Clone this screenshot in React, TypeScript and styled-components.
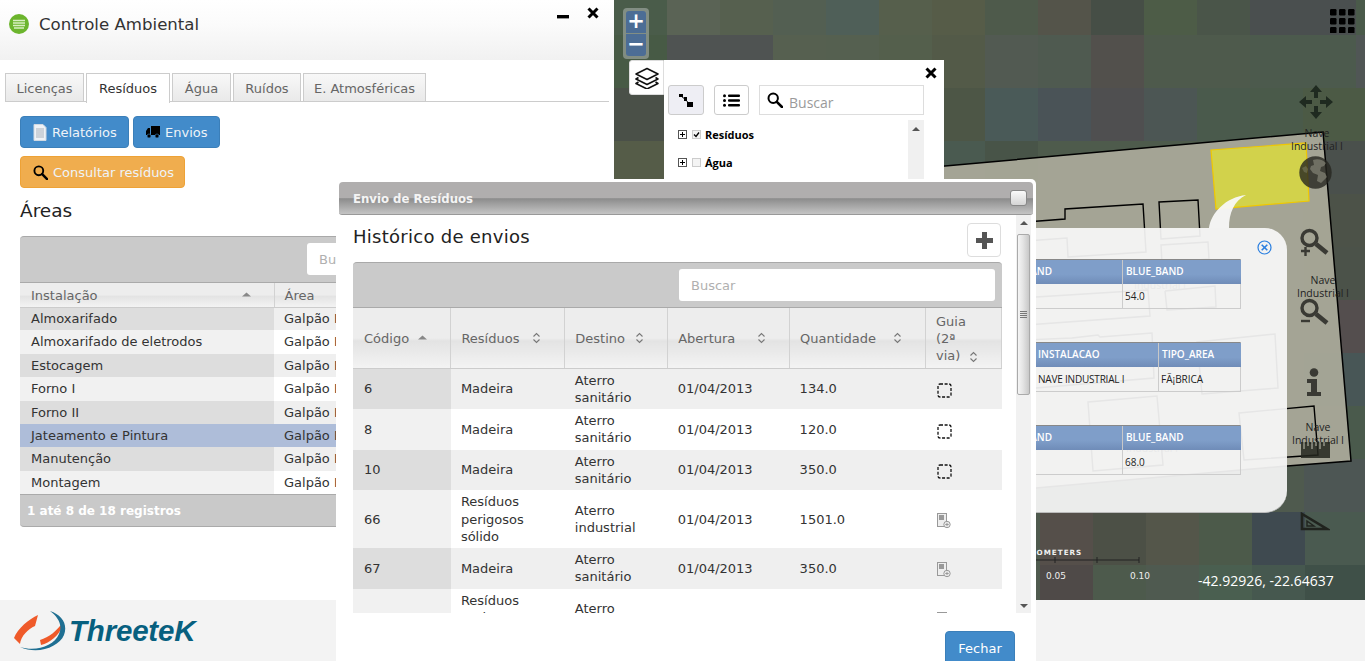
import React from 'react';
import styled, { createGlobalStyle } from 'styled-components';

const Global = createGlobalStyle`
  html, body { margin: 0; padding: 0; background: #fff; overflow: hidden; }
  * { box-sizing: border-box; }
  body { font-family: "DejaVu Sans", Verdana, sans-serif; font-size: 13px; color: #333; }
`;

const Page = styled.div`
  position: relative; width: 1365px; height: 661px; overflow: hidden;
  display: grid; grid-template-rows: 600px 61px;
`;
const TopRow = styled.div`display: flex; min-height: 0;`;
const LeftPanel = styled.section`width: 614px; flex: none; display: flex; flex-direction: column; background: #fff; overflow: hidden;`;
const AppHeader = styled.header`
  height: 60px; flex: none; display: flex; align-items: flex-start; gap: 10px; padding: 14px 0 0 9px;
  background: linear-gradient(#ffffff 0%, #fbfbfb 40%, #f1f1f1 100%); position: relative;
`;
const AppTitle = styled.h1`margin: 0; font: 400 16.6px/21px "DejaVu Sans", sans-serif; color: #333;`;
const WinControls = styled.div`margin-left: auto; margin-right: 15px; margin-top: -13px; display: flex; gap: 17px; align-items: center; height: 24px;`;
const Tabs = styled.nav`margin: 13px 5px 0 5px; height: 29px; display: flex; gap: 2px; border-bottom: 1px solid #ccc; flex: none;`;
const Tab = styled.div<{ $active?: boolean; $w: number }>`
  width: ${p => p.$w}px; height: ${p => (p.$active ? 30 : 29)}px; text-align: center; font-size: 13px; line-height: 29px;
  border: 1px solid #ccc; border-bottom: ${p => (p.$active ? 'none' : '1px solid #ccc')};
  color: ${p => (p.$active ? '#333' : '#666')};
  background: ${p => (p.$active ? '#fff' : 'linear-gradient(#f8f8f8, #e9e9e9)')};
`;
const ButtonRow = styled.div<{ $top: number }>`display: flex; gap: 4px; margin-top: ${p => p.$top}px; padding-left: 20px; flex: none;`;
const ActionButton = styled.button<{ $tone: 'blue' | 'orange'; $w: number }>`
  width: ${p => p.$w}px; height: 32px; padding: 0 0 0 12px; display: flex; align-items: center; gap: 5px;
  font: 400 13px "DejaVu Sans", sans-serif; color: #eef3f8; border-radius: 4px;
  background: ${p => (p.$tone === 'blue' ? '#428bca' : '#f0ad4e')};
  border: 1px solid ${p => (p.$tone === 'blue' ? '#3b7fb9' : '#eea236')};
`;
const SectionTitle = styled.h2`margin: 12px 0 0 20px; font: 400 18.5px/22px "DejaVu Sans", sans-serif; color: #222; flex: none;`;

const GridShell = styled.div<{ $left?: number; $top?: number }>`margin-left: ${p => p.$left ?? 0}px; margin-top: ${p => p.$top ?? 0}px; flex: none;`;
const GridToolbar = styled.div<{ $h: number }>`
  height: ${p => p.$h}px; background: #cacaca; border-top: 1px solid #a9a9a9; border-radius: 4px 4px 0 0;
  border-bottom: 1px solid #aaa; display: flex; align-items: flex-start; padding-top: 6px;
`;
const GridSearch = styled.div<{ $x: number; $w: number }>`
  margin-left: ${p => p.$x}px; width: ${p => p.$w}px; height: 32px; background: #fff; border-radius: 3px;
  color: #b0b0b0; font-size: 13px; line-height: 33px; padding-left: 12px;
`;
const Table = styled.table`border-collapse: collapse; table-layout: fixed; background: #fff;`;
const HeadCell = styled.th<{ $w: number; $h: number; $narrow?: boolean }>`
  position: relative; width: ${p => p.$w}px; height: ${p => p.$h}px; text-align: left; font: 400 13px/17px "DejaVu Sans", sans-serif;
  color: #666; padding: 1px ${p => (p.$narrow ? 22 : 10)}px 0 10px; border-right: 1px solid #d2d2d2; border-bottom: 1px solid #ccc;
  background: linear-gradient(#ededed 0 50%, #e3e3e3 55%, #f3f3f3 100%);
  &:first-child { padding-left: 11px; }
`;
const SortMark = styled.span<{ $bottom?: boolean }>`
  position: absolute; right: 24px; width: 8px; height: 12px; display: block;
  ${p => (p.$bottom ? 'bottom: 6px;' : 'top: 50%; margin-top: -7px;')}
`;
const Row = styled.tr<{ $alt: boolean; $selected?: boolean }>`
  background: ${p => (p.$selected ? '#aebdd9' : p.$alt ? '#efefef' : '#fff')};
  & > td:first-child { background: ${p => (p.$selected ? '#aebdd9' : p.$alt ? '#dddddd' : '#f1f1f1')}; padding-left: 11px; }
`;
const Cell = styled.td`
  padding: 3px 10px; font: 400 13px/17.3px "DejaVu Sans", sans-serif; color: #333; vertical-align: middle;
`;
const CompactCell = styled(Cell)`
  height: 23.4px; padding-top: 0; padding-bottom: 0; white-space: nowrap; overflow: hidden;
`;
const GuideIcon = styled.span`display: block; margin: 4px 0 0 2px; line-height: 0;`;
const GridFooter = styled.div`
  height: 33px; background: #c9c9c9; border-top: 1px solid #aaa; border-bottom: 1px solid #aaa; border-radius: 0 0 4px 4px;
  font: 700 12px/33px "DejaVu Sans", sans-serif; color: #fff; padding-left: 7px;
`;

const BottomBar = styled.footer`background: #f3f3f3; display: flex; align-items: center; padding: 0 0 0 12px; gap: 1px;`;
const LogoText = styled.span`font: italic 700 29.5px/1 "Liberation Sans", sans-serif; color: #07607f; letter-spacing: -0.2px;`;

const MapArea = styled.section`position: relative; flex: 1; overflow: hidden; background: #4f5a4e;`;
const MapCanvas = styled.svg`display: block; width: 751px; height: 600px;`;
const ZoomGroup = styled.div`
  position: absolute; left: 9px; top: 8px; width: 26px; height: 51px; padding: 3px; border-radius: 4px;
  background: rgba(200,205,205,.45); display: flex; flex-direction: column; gap: 1px;
`;
const ZoomBtn = styled.div<{ $top?: boolean }>`
  flex: 1; background: #4c6d95; color: #fff; font: 700 21px/21px "DejaVu Sans", sans-serif; text-align: center;
  border-radius: ${p => (p.$top ? '3px 3px 0 0' : '0 0 3px 3px')};
`;
const LayersBtn = styled.div`
  position: absolute; left: 15px; top: 60px; width: 35px; height: 35px; background: #fff; border: 1px solid #ddd; border-radius: 3px 0 0 3px;
  display: flex; align-items: center; justify-content: center;
`;
const LayerPanel = styled.div`position: absolute; left: 50px; top: 60px; width: 280px; height: 125px; background: #fff; padding: 25px 20px 0 4px;`;
const PanelClose = styled.span`position: absolute; right: 7px; top: 7px; width: 12px; height: 12px; display: block;`;
const PanelTools = styled.div`display: flex; align-items: stretch; height: 30px;`;
const ToolBtn = styled.div<{ $on?: boolean }>`
  width: ${p => (p.$on ? 36 : 35)}px; height: 30px; margin-right: 10px; border: 1px solid #ccc; border-radius: 3px; background: ${p => (p.$on ? '#eeeef4' : '#fff')};
  display: flex; align-items: center; justify-content: center;
`;
const PanelSearch = styled.div`
  width: 165px; border: 1px solid #ddd; display: flex; align-items: center; gap: 6px; padding-left: 7px;
  font: 400 14px "Open Sans", sans-serif; color: #9a9a9a;
`;
const PanelSearchText = styled.span`margin-top: 4px;`;
const TreeArea = styled.div`display: flex; margin-top: 5px; height: 60px;`;
const TreeList = styled.div`flex: 1; padding: 0 0 0 10px;`;
const TreeRow = styled.div`display: flex; align-items: center; height: 28px; gap: 5px; font: 700 11px "Open Sans", sans-serif; color: #000;`;
const Expander = styled.span`width: 9px; height: 9px; display: block; flex: none;`;
const TreeCheck = styled.span`width: 9px; height: 9px; border: 1px solid #ccc; background: #f4f4f4; flex: none; display: block; margin-right: -1px; position: relative;`;
const PanelScroll = styled.div`width: 16px; background: #f0f0f0; display: flex; justify-content: center; padding-top: 7px;`;
const ArrowUp = styled.span<{ $c?: string }>`width: 0; height: 0; border: 4px solid transparent; border-top: 0; border-bottom: 4px solid ${p => p.$c ?? '#555'}; display: block;`;
const ArrowDown = styled.span`width: 0; height: 0; border: 4px solid transparent; border-bottom: 0; border-top: 4px solid #555; display: block;`;

const MapLabel = styled.span<{ $x: number; $y: number }>`
  position: absolute; left: ${p => p.$x}px; top: ${p => p.$y}px; width: 100px; text-align: center;
  font: 400 10.5px/13px "Open Sans", sans-serif; color: #222;
`;
const ToolIcon = styled.span<{ $x: number; $y: number }>`position: absolute; left: ${p => p.$x}px; top: ${p => p.$y}px; display: block; line-height: 0;`;
const Bubble = styled.div`
  position: absolute; left: 286px; top: 228px; width: 387px; height: 285px; border-radius: 0 22px 22px 0;
  background: rgba(248,248,247,.93); border-bottom: 1px solid #bbb;
`;
const BubbleTail = styled.svg`position: absolute; left: 594px; top: 195px; width: 40px; height: 33px;`;
const BubbleClose = styled.span`position: absolute; left: 357px; top: 12px; width: 15px; height: 15px; display: block; line-height: 0;`;
const FeatureTable = styled.div<{ $top: number; $cols: string }>`
  position: absolute; left: 0; top: ${p => p.$top}px; width: 341px; display: grid; grid-template-columns: ${p => p.$cols}; grid-template-rows: 24px 24px;
  border-top: 1px solid #888; border-right: 1px solid #ccc; border-bottom: 1px solid #ccc;
`;
const FeatureHead = styled.div<{ $pl?: number; $pr?: number }>`
  background: linear-gradient(#7f9ec9 0 60%, #6f8cb8 100%); color: #fff; font: 600 10px/23px "Open Sans", sans-serif; white-space: nowrap;
  padding: 0 ${p => p.$pr ?? 3}px 0 ${p => p.$pl ?? 3}px; text-align: ${p => (p.$pr ? 'right' : 'left')};
  border-left: 1px solid #c8c8c8; overflow: hidden;
`;
const FeatureCell = styled.div<{ $pl?: number }>`
  font: 400 10px/24px "Open Sans", sans-serif; color: #222; padding: 0 2px 0 ${p => p.$pl ?? 2}px; border-left: 1px solid #ccc; white-space: nowrap;
  letter-spacing: ${p => (p.$pl ? '-.2px' : '0')};
`;
const ScaleTitle = styled.span`position: absolute; left: 407px; top: 547px; font: 700 7.2px/12px "DejaVu Sans", sans-serif; letter-spacing: 1px; color: #f0f0f0; white-space: nowrap;`;
const ScaleNum = styled.span<{ $x: number }>`position: absolute; left: ${p => p.$x}px; top: 570px; font: 400 9px/12px "DejaVu Sans", sans-serif; color: #eee;`;
const Coords = styled.span`position: absolute; left: 584px; top: 572px; font: 400 14px/18px "Open Sans", sans-serif; color: #fff;`;

const Modal = styled.div`
  position: absolute; left: 336px; top: 179px; width: 700px; height: 490px; background: #fff; border-radius: 5px 5px 0 0;
  padding: 3px 3px 0; display: flex; flex-direction: column;
`;
const ModalBar = styled.div`
  height: 33px; flex: none; border-radius: 4px 4px 3px 3px; position: relative; padding-left: 14px;
  background: linear-gradient(#b0aeae 0 50%, #8c8c8c 52%, #c4c4c4 100%); border-bottom: 1px solid #999;
  font: 700 11.7px/35px "DejaVu Sans", sans-serif; color: #f4f4f4;
`;
const MinBox = styled.span`position: absolute; right: 6px; top: 8px; width: 17px; height: 16px; border: 1px solid #888; border-radius: 3px; background: linear-gradient(#fafafa, #d5d5d5);`;
const ModalBody = styled.div`display: flex; height: 398px; flex: none;`;
const ModalScrollArea = styled.div`width: 677px; flex: none; overflow: hidden; padding: 0 14px;`;
const ModalTitleRow = styled.div`display: flex; justify-content: space-between; align-items: flex-start; height: 47px; padding-top: 8px;`;
const ModalTitle = styled.h2`margin: 2px 0 0; font: 400 18px/24px "DejaVu Sans", sans-serif; letter-spacing: .27px; color: #222;`;
const AddBtn = styled.div`width: 34px; height: 34px; border: 1px solid #ddd; border-radius: 4px; background: #fff; display: flex; align-items: center; justify-content: center; margin-right: 1px;`;
const VScroll = styled.div`width: 15px; flex: none; background: #f1f1f1; display: flex; flex-direction: column; align-items: center; padding-top: 6px; position: relative;`;
const VThumb = styled.div`
  position: absolute; left: 1px; top: 19px; width: 13px; height: 161px; border: 1px solid #aaa; border-radius: 2px;
  background: linear-gradient(90deg, #f5f5f5, #e4e4e4 45%, #c8c8c8); display: flex; flex-direction: column; justify-content: center; align-items: center; gap: 1px;
`;
const Grip = styled.i`display: block; width: 7px; height: 1px; background: #777;`;
const VBottom = styled.div`margin-top: auto; padding-bottom: 5px;`;
const ModalFooter = styled.div`display: flex; justify-content: flex-end; padding: 18px 18px 0 0;`;
const CloseBtn = styled.button`
  width: 70px; height: 34px; border: 1px solid #3b7fb9; border-radius: 4px; background: #428bca; color: #fff; font: 400 13px "DejaVu Sans", sans-serif; padding: 0;
`;

const tiles = [
  '#4a5c4a #5a6355 #56604f #535f52 #4f5f58 #565f4c #565c48 #4e5a4b #54544a #464e46 #4d5c47 #4a5549 #4a4f4f #4a4f4f #4a5a4a'.split(' '),
  '#475a45 #4f5352 #4f5352 #566050 #556050 #545f4c #535a48 #525a52 #4f5a50 #52504c #4e5a4c #4e5a4c #4c5a4d #4c5a4d #505655'.split(' '),
  '#4a5048 #4c5352 #555c50 #556050 #55604f #505e4a #4d5646 #4a5a58 #4a5357 #4f4f50 #4c5654 #4a5a4c #4a5a4a #4c5a45 #4c5a45'.split(' '),
  '#555c48 #555f4a #565f4a #50604d #4f5f4f #4e5f4e #4a5a50 #485448 #4e5b4c #4e5b4c #4e5b4c #4c5a4c #4c5a4d #4a504c #4a504c'.split(' '),
  '#4f5a46 #555f4a #565f4a #50604d #4f5f4f #4e5f4e #4f5c4e #505a4d #4f5a50 #514f4d #4f5a50 #4c5a4c #4c5a4d #4c5248 #4c5248'.split(' '),
];
const lowTiles = '#554f4a #4c5046 #54564a #4c5a4a #3f4a50 #4a5a50 #4a5a50'.split(' ');
const baseTiles = '#4f4a48 #4d5a4c #4f5a50 #4a5f50 #46584f #3f5048 #3f5048'.split(' ');
const rightCol = ['#4b5249', '#544e4e', '#485656', '#4a5a4c', '#4d5654', '#4d5654'];

const MapImage = () => (
  <MapCanvas viewBox="614 0 751 600" shapeRendering="crispEdges">
    {tiles.map((row, r) => row.map((c, i) => (
      <rect key={`${r}-${i}`} x={615 + 53 * i - 1} y={-18 + 53 * r} width={54} height={54} fill={c} />
    )))}
    {Array.from({ length: 5 }).map((_, r) => (
      <rect key={r} x={1304} y={247 + 53 * r} width={61} height={54} fill={rightCol[r]} />
    ))}
    {lowTiles.map((c, i) => <rect key={i} x={1040 + 53 * i} y={512} width={54} height={53} fill={c} />)}
    {baseTiles.map((c, i) => <rect key={i} x={1040 + 53 * i} y={565} width={54} height={35} fill={c} />)}
    <g shapeRendering="auto">
      <polygon points="900,170 1323,132 1351,461 1287,466 1036,488 900,500" fill="#a9a999" fillOpacity=".95" stroke="#000" strokeWidth="1.5" />
      <polygon points="1211,150 1306,143 1309,201 1216,209" fill="#d2d24b" stroke="#f0c800" strokeWidth="1.2" />
      <g fill="none" stroke="#000" strokeWidth="1.4">
        <polygon points="1000,224 1065,219 1065,209 1143,204 1146,252 1068,257 1067,238 1000,243" />
        <polygon points="1159,202 1198,200 1200,236 1161,239" />
        <polygon points="1161,245 1208,242 1209,259 1162,263" />
        <polyline points="1000,327 1150,316 1148,290 1036,297" />
        <polyline points="1165,291 1215,286 1216,307 1167,310 1165,291" />
        <polygon points="1072,338 1098,335 1100,337 1152,333 1154,378 1036,388 1000,390 1000,341" />
        <polygon points="1197,342 1275,334 1278,388 1202,394" />
        <polygon points="1088,402 1157,396 1163,465 1093,471" />
        <polygon points="1239,413 1314,406 1318,455 1244,460" />
      </g>
      <path d="M1000 560H1139M1055 557v6M1097 557v6M1139 557v6" stroke="#222" fill="none" />
    </g>
  </MapCanvas>
);

const DocIcon = () => (
  <svg width="14" height="17" viewBox="0 0 14 17"><path d="M1 .5h9l3 3v13H1z" fill="#eef2f6" stroke="#cfd8e2" /><path d="M3 5h8M3 7h8M3 9h8M3 11h8M3 13h8" stroke="#aab3bd" /></svg>
);
const TruckIcon = () => (
  <svg width="14" height="12" viewBox="0 0 14 12"><path d="M5 0h9v9H5zM0 9V5l2-3h2v7z" fill="#000" /><circle cx="3" cy="10" r="2" fill="#000" stroke="#428bca" strokeWidth=".6" /><circle cx="11" cy="10" r="2" fill="#000" stroke="#428bca" strokeWidth=".6" /></svg>
);
const SearchIcon = ({ s = 16, c = '#000' }: { s?: number; c?: string }) => (
  <svg width={s} height={s} viewBox="0 0 16 16"><circle cx="6.2" cy="6.2" r="4.7" fill="none" stroke={c} strokeWidth="2" /><path d="M9.8 9.8L15 15" stroke={c} strokeWidth="2.6" strokeLinecap="round" /></svg>
);
const CloseX = ({ s = 12 }: { s?: number }) => (
  <svg width={s} height={s} viewBox="0 0 12 12"><path d="M1.5 1.5l9 9M10.5 1.5l-9 9" stroke="#000" strokeWidth="3" /></svg>
);
const LayersIcon = () => (
  <svg width="24" height="22" viewBox="0 0 24 22" fill="none" stroke="#111" strokeWidth="1.6" strokeLinejoin="round">
    <path d="M12 1.5L23 7l-11 5.5L1 7z" /><path d="M3.5 10.5L1 12l11 5.5L23 12l-2.5-1.5" /><path d="M3.5 15L1 16.5 12 22l11-5.5L20.5 15" />
  </svg>
);
const SortBoth = () => (
  <svg width="9" height="12" viewBox="0 0 9 12" fill="none" stroke="#777" strokeWidth="1.1"><path d="M1.5 4.5l3-3 3 3M1.5 7.5l3 3 3-3" /></svg>
);
const SortUp = () => (
  <svg width="9" height="12" viewBox="0 0 9 12"><path d="M0 7.5l4.5-4 4.5 4z" fill="#888" /></svg>
);
const DashedBox = () => (
  <svg width="15" height="15" viewBox="0 0 15 15"><rect x="1" y="1" width="13" height="13" rx="2" fill="none" stroke="#111" strokeWidth="1.3" strokeDasharray="3 1.6" /></svg>
);
const FileIcon = () => (
  <svg width="14" height="16" viewBox="0 0 14 16"><rect x=".5" y=".5" width="9" height="13" fill="#eee" stroke="#999" /><rect x="2" y="2" width="5" height="5" fill="#999" /><circle cx="10" cy="11.5" r="3.2" fill="#eee" stroke="#999" /><path d="M10 9.8v3.4M8.3 11.5h3.4" stroke="#999" /></svg>
);
const ExpanderIcon = () => (
  <Expander><svg width="9" height="9" viewBox="0 0 9 9" style={{ display: 'block' }}><rect x=".5" y=".5" width="8" height="8" fill="#fff" stroke="#555" /><path d="M2 4.5h5M4.5 2v5" stroke="#000" /></svg></Expander>
);
const LogoMark = () => (
  <svg width="56" height="44" viewBox="0 0 56 44">
    <path d="M26 6C17 10 6 19 2 29l6 6c1-8 8-15 15-18z" fill="#ef5a2a" />
    <path d="M50 14C45 22 37 28 28 31l1 5c9-2 18-10 21-18z" fill="#ef5a2a" />
    <path d="M38 2c12 4 18 13 14 24C47 38 26 46 8 38c16 5 34-1 39-13 4-9-1-17-9-23z" fill="#1f6f92" />
  </svg>
);

const leftRows = ['Almoxarifado', 'Almoxarifado de eletrodos', 'Estocagem', 'Forno I', 'Forno II', 'Jateamento e Pintura', 'Manutenção', 'Montagem'];

type Ship = { id: string; res: string; dest: string; date: string; qty: string; pending: boolean };
const ships: Ship[] = [
  { id: '6', res: 'Madeira', dest: 'Aterro sanitário', date: '01/04/2013', qty: '134.0', pending: true },
  { id: '8', res: 'Madeira', dest: 'Aterro sanitário', date: '01/04/2013', qty: '120.0', pending: true },
  { id: '10', res: 'Madeira', dest: 'Aterro sanitário', date: '01/04/2013', qty: '350.0', pending: true },
  { id: '66', res: 'Resíduos perigosos sólido', dest: 'Aterro industrial', date: '01/04/2013', qty: '1501.0', pending: false },
  { id: '67', res: 'Madeira', dest: 'Aterro sanitário', date: '01/04/2013', qty: '350.0', pending: false },
  { id: '68', res: 'Resíduos perigosos sólido', dest: 'Aterro industrial', date: '01/04/2013', qty: '90.0', pending: false },
];
const shipCols: [string, number, boolean][] = [['Código', 98, true], ['Resíduos', 114, false], ['Destino', 103, false], ['Abertura', 122, false], ['Quantidade', 136, false], ['Guia (2ª via)', 76, false]];

const toolPaths = {
  move: (
    <svg width="34" height="34" viewBox="0 0 34 34" fill="#1f2a20">
      <path d="M17 0l6 7h-4v6h-4V7h-4zM17 34l-6-7h4v-6h4v6h4zM0 17l7-6v4h6v4H7v4zM34 17l-7 6v-4h-6v-4h6v-4z" />
    </svg>
  ),
  globe: (
    <svg width="33" height="33" viewBox="0 0 33 33">
      <circle cx="16.5" cy="16.5" r="16.2" fill="#26261f" fillOpacity=".8" />
      <path d="M14 4c5-2 10 0 13 3l-2 3-3 1-1 4 5 2 2 4-6 6-4-2 1-6-5-2-3-4 1-3 3-1z" fill="#b8b8a5" fillOpacity=".4" />
      <path d="M3 12l4-2 2 3-1 4-3-1z" fill="#b8b8a5" fillOpacity=".25" />
    </svg>
  ),
  zoomIn: (
    <svg width="30" height="30" viewBox="0 0 30 30" fill="none" stroke="#3a3a34">
      <circle cx="10.5" cy="10" r="7.5" strokeWidth="3.4" />
      <path d="M17 16l11 9" strokeWidth="4.6" />
      <path d="M2 23h9M6.5 19v9" strokeWidth="2.4" />
    </svg>
  ),
  zoomOut: (
    <svg width="30" height="30" viewBox="0 0 30 30" fill="none" stroke="#3a3a34">
      <circle cx="10.5" cy="11" r="7.5" strokeWidth="3.4" />
      <path d="M17 17l11 9" strokeWidth="4.6" />
      <path d="M2 24h9" strokeWidth="2.4" />
    </svg>
  ),
  info: <svg width="16" height="28" viewBox="0 0 16 28" fill="#3a3a34"><circle cx="8" cy="4.5" r="4.3" /><path d="M1 11h10v13h4v4H1v-4h4v-9H1z" /></svg>,
  ruler: <svg width="29" height="16" viewBox="0 0 29 16"><rect width="29" height="16" fill="#25271f" fillOpacity=".85" /><path d="M3 0v7M7 0v4M11 0v7M15 0v4M19 0v7M23 0v4" stroke="#c5c5b5" /></svg>,
  triangle: <svg width="30" height="19" viewBox="0 0 30 19" fill="none" stroke="#20231e" strokeWidth="2.6"><path d="M2 2v15h25z" /><path d="M7 9v5h7z" strokeWidth="1.4" /></svg>,
};

export default function App() {
  return (
    <Page>
      <Global />
      <TopRow>
        <LeftPanel>
          <AppHeader>
            <svg width="20" height="20" viewBox="0 0 20 20">
              <circle cx="10" cy="10" r="10" fill="#6cb52d" />
              <path d="M4 6.5h12M4 9h12M4 11.5h12M5 14h10" stroke="#d8efc0" strokeWidth="1.4" />
            </svg>
            <AppTitle>Controle Ambiental</AppTitle>
            <WinControls>
              <svg width="14" height="14" viewBox="0 0 14 14"><rect x="1" y="9" width="12" height="3.4" fill="#000" /></svg>
              <CloseX />
            </WinControls>
          </AppHeader>
          <Tabs>
            <Tab $w={79}>Licenças</Tab>
            <Tab $w={84} $active>Resíduos</Tab>
            <Tab $w={59}>Água</Tab>
            <Tab $w={68}>Ruídos</Tab>
            <Tab $w={123}>E. Atmosféricas</Tab>
          </Tabs>
          <ButtonRow $top={14}>
            <ActionButton $tone="blue" $w={109}><DocIcon />Relatórios</ActionButton>
            <ActionButton $tone="blue" $w={87}><TruckIcon />Envios</ActionButton>
          </ButtonRow>
          <ButtonRow $top={8}>
            <ActionButton $tone="orange" $w={165}><SearchIcon s={15} />Consultar resíduos</ActionButton>
          </ButtonRow>
          <SectionTitle>Áreas</SectionTitle>
          <GridShell $left={20} $top={14}>
            <GridToolbar $h={47}><GridSearch $x={287} $w={300}>Buscar</GridSearch></GridToolbar>
            <Table>
              <thead>
                <tr>
                  <HeadCell $w={254} $h={24}>Instalação<SortMark><SortUp /></SortMark></HeadCell>
                  <HeadCell $w={330} $h={24}>Área</HeadCell>
                </tr>
              </thead>
              <tbody>
                {leftRows.map((name, i) => (
                  <Row key={name} $alt={i % 2 === 0} $selected={name.startsWith('Jateamento')}>
                    <CompactCell>{name}</CompactCell>
                    <CompactCell>Galpão Principal</CompactCell>
                  </Row>
                ))}
              </tbody>
            </Table>
            <GridFooter>1 até 8 de 18 registros</GridFooter>
          </GridShell>
        </LeftPanel>
        <MapArea>
          <MapImage />
          <ZoomGroup>
            <ZoomBtn $top>+</ZoomBtn>
            <ZoomBtn>−</ZoomBtn>
          </ZoomGroup>
          <LayersBtn><LayersIcon /></LayersBtn>
          <LayerPanel>
            <PanelClose><CloseX /></PanelClose>
            <PanelTools>
              <ToolBtn $on>
                <svg width="15" height="15" viewBox="0 0 15 15"><path d="M2 3l5 4 4 5" stroke="#000" fill="none" /><rect x="0" y="1" width="4" height="3" /><rect x="5" y="4" width="3" height="4" /><rect x="8" y="9" width="6" height="5" /></svg>
              </ToolBtn>
              <ToolBtn>
                <svg width="17" height="13" viewBox="0 0 17 13"><circle cx="1.5" cy="1.8" r="1.5" /><circle cx="1.5" cy="6.5" r="1.5" /><circle cx="1.5" cy="11.2" r="1.5" /><rect x="5" y=".4" width="12" height="2.6" rx="1" /><rect x="5" y="5.2" width="12" height="2.6" rx="1" /><rect x="5" y="10" width="12" height="2.6" rx="1" /></svg>
              </ToolBtn>
              <PanelSearch><SearchIcon s={16} /><PanelSearchText>Buscar</PanelSearchText></PanelSearch>
            </PanelTools>
            <TreeArea>
              <TreeList>
                <TreeRow><ExpanderIcon /><TreeCheck><svg width="7" height="7" viewBox="0 0 7 7" style={{ display: 'block' }}><path d="M1 3.5l2 2 3-4" stroke="#000" strokeWidth="1.3" fill="none" /></svg></TreeCheck>Resíduos</TreeRow>
                <TreeRow><ExpanderIcon /><TreeCheck />Água</TreeRow>
              </TreeList>
              <PanelScroll><ArrowUp /></PanelScroll>
            </TreeArea>
          </LayerPanel>

          <MapLabel $x={653} $y={127}>Nave<br />Industrial I</MapLabel>
          <MapLabel $x={659} $y={274}>Nave<br />Industrial I</MapLabel>
          <MapLabel $x={654} $y={421}>Nave<br />Industrial I</MapLabel>
          <ToolIcon $x={685} $y={85}>{toolPaths.move}</ToolIcon>
          <ToolIcon $x={685} $y={156}>{toolPaths.globe}</ToolIcon>
          <ToolIcon $x={685} $y={228}>{toolPaths.zoomIn}</ToolIcon>
          <ToolIcon $x={685} $y={297}>{toolPaths.zoomOut}</ToolIcon>
          <ToolIcon $x={692} $y={368}>{toolPaths.info}</ToolIcon>
          <ToolIcon $x={687} $y={442}>{toolPaths.ruler}</ToolIcon>
          <ToolIcon $x={686} $y={512}>{toolPaths.triangle}</ToolIcon>
          <ToolIcon $x={716} $y={9}>
            <svg width="25" height="24" viewBox="0 0 25 24" fill="#000">
              {[0, 9, 18].map(y => [0, 9, 18].map(x => <rect key={`${x}${y}`} x={x} y={y} width="6.5" height="6.5" rx="1.2" />))}
            </svg>
          </ToolIcon>

          <MapLabel $x={496} $y={279}>Industrial I</MapLabel>
          <MapLabel $x={488} $y={442}>Industrial I</MapLabel>
          <BubbleTail viewBox="0 0 40 33"><path d="M1 33C3 18 18 2 38 0 26 6 21 18 21 33z" fill="#f8f8f7" fillOpacity=".95" /></BubbleTail>
          <Bubble>
            <BubbleClose>
              <svg width="15" height="15" viewBox="0 0 15 15" fill="none" stroke="#2a7fe0" strokeWidth="1.2"><circle cx="7.5" cy="7.5" r="6.5" /><path d="M4.7 4.7l5.6 5.6M10.3 4.7l-5.6 5.6" strokeWidth="1.6" /></svg>
            </BubbleClose>
            <FeatureTable $top={31} $cols="222px 119px">
              <FeatureHead $pr={70}>GREEN_BAND</FeatureHead><FeatureHead>BLUE_BAND</FeatureHead>
              <FeatureCell>61.0</FeatureCell><FeatureCell>54.0</FeatureCell>
            </FeatureTable>
            <FeatureTable $top={114} $cols="258px 83px">
              <FeatureHead $pl={137}>INSTALACAO</FeatureHead><FeatureHead>TIPO_AREA</FeatureHead>
              <FeatureCell $pl={137}>NAVE INDUSTRIAL I</FeatureCell><FeatureCell>FÃ¡BRICA</FeatureCell>
            </FeatureTable>
            <FeatureTable $top={197} $cols="222px 119px">
              <FeatureHead $pr={70}>GREEN_BAND</FeatureHead><FeatureHead>BLUE_BAND</FeatureHead>
              <FeatureCell>72.0</FeatureCell><FeatureCell>68.0</FeatureCell>
            </FeatureTable>
          </Bubble>
          <ScaleTitle>KILOMETERS</ScaleTitle>
          <ScaleNum $x={432}>0.05</ScaleNum>
          <ScaleNum $x={516}>0.10</ScaleNum>
          <Coords>-42.92926, -22.64637</Coords>
        </MapArea>
      </TopRow>
      <BottomBar>
        <LogoMark />
        <LogoText>ThreeteK</LogoText>
      </BottomBar>

      <Modal>
        <ModalBar>Envio de Resíduos<MinBox /></ModalBar>
        <ModalBody>
          <ModalScrollArea>
            <ModalTitleRow>
              <ModalTitle>Histórico de envios</ModalTitle>
              <AddBtn>
                <svg width="17" height="17" viewBox="0 0 17 17"><path d="M6 0h5v6h6v5h-6v6H6v-6H0V6h6z" fill="#555" /></svg>
              </AddBtn>
            </ModalTitleRow>
            <GridShell>
              <GridToolbar $h={46}><GridSearch $x={326} $w={316}>Buscar</GridSearch></GridToolbar>
              <Table>
                <thead>
                  <tr>
                    {shipCols.map(([label, w, active]) => (
                      <HeadCell key={label} $w={w} $h={60} $narrow={label.startsWith('Guia')}>
                        {label}
                        <SortMark $bottom={label.startsWith('Guia')}>{active ? <SortUp /> : <SortBoth />}</SortMark>
                      </HeadCell>
                    ))}
                  </tr>
                </thead>
                <tbody>
                  {ships.map((s, i) => (
                    <Row key={s.id} $alt={i % 2 === 0} $selected={false}>
                      <Cell>{s.id}</Cell>
                      <Cell>{s.res}</Cell>
                      <Cell>{s.dest}</Cell>
                      <Cell>{s.date}</Cell>
                      <Cell>{s.qty}</Cell>
                      <Cell><GuideIcon>{s.pending ? <DashedBox /> : <FileIcon />}</GuideIcon></Cell>
                    </Row>
                  ))}
                </tbody>
              </Table>
            </GridShell>
          </ModalScrollArea>
          <VScroll>
            <ArrowUp />
            <VThumb><Grip /><Grip /><Grip /><Grip /></VThumb>
            <VBottom><ArrowDown /></VBottom>
          </VScroll>
        </ModalBody>
        <ModalFooter><CloseBtn>Fechar</CloseBtn></ModalFooter>
      </Modal>
    </Page>
  );
}
